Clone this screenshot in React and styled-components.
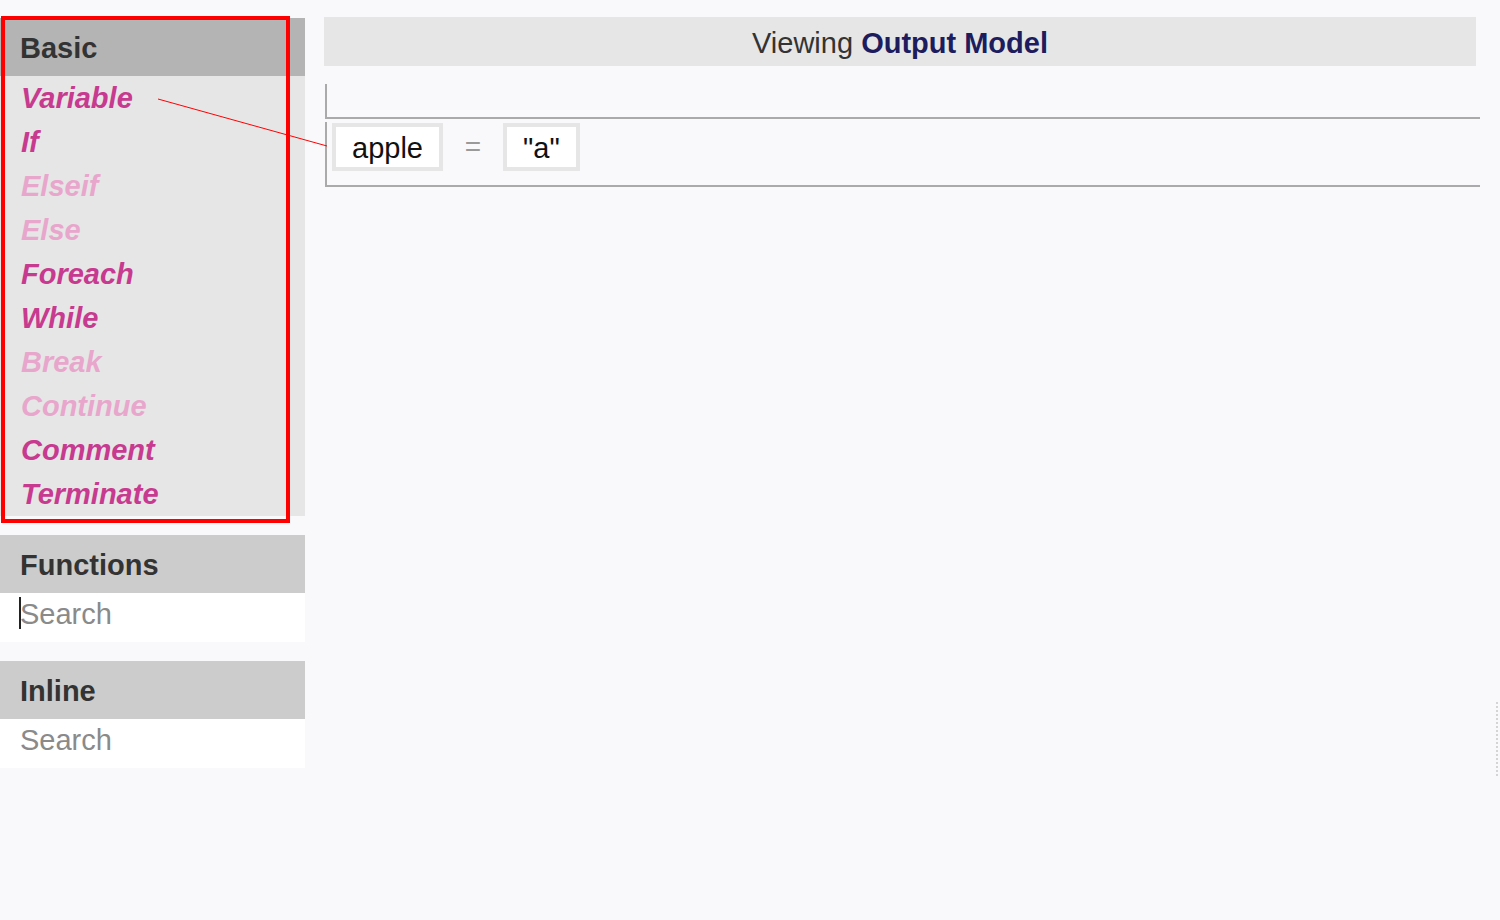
import React from 'react';
import styled, { createGlobalStyle } from 'styled-components';

const GlobalStyle = createGlobalStyle`
  html, body {
    margin: 0;
    padding: 0;
    background: #f9f9fb;
    font-family: "Liberation Sans", Arial, sans-serif;
  }
`;

const basicItems = [
  { name: 'Variable', enabled: true },
  { name: 'If', enabled: true },
  { name: 'Elseif', enabled: false },
  { name: 'Else', enabled: false },
  { name: 'Foreach', enabled: true },
  { name: 'While', enabled: true },
  { name: 'Break', enabled: false },
  { name: 'Continue', enabled: false },
  { name: 'Comment', enabled: true },
  { name: 'Terminate', enabled: true },
];

function App() {
  return (
    <Page>
      <GlobalStyle />
      <Sidebar>
        <Section>
          <SectionHeader tone='#b4b4b4'>Basic</SectionHeader>
          <ItemList>
            {basicItems.map((item) => (
              <Item key={item.name} enabled={item.enabled}>
                {item.name}
              </Item>
            ))}
          </ItemList>
        </Section>

        <Section>
          <SectionHeader tone='#cccccc'>Functions</SectionHeader>
          <SearchWrap>
            <Caret />
            <SearchInput placeholder='Search' />
          </SearchWrap>
        </Section>

        <Section>
          <SectionHeader tone='#cccccc'>Inline</SectionHeader>
          <SearchWrap>
            <SearchInput placeholder='Search' />
          </SearchWrap>
        </Section>
      </Sidebar>

      <Main>
        <TitleBar>
          Viewing <strong>Output Model</strong>
        </TitleBar>

        <Block height={32} />
        <Block height={62}>
          <Token>apple</Token>
          <Equals>=</Equals>
          <Token>"a"</Token>
        </Block>
      </Main>

      {/* annotation overlay */}
      <Highlight />
      <Pointer width='1500' height='920'>
        <line x1='158' y1='99' x2='327' y2='146' stroke='#ff0000' strokeWidth='1' />
      </Pointer>
      <Grip />
    </Page>
  );
}

const Page = styled.div`
  position: relative;
  display: flex;
  align-items: flex-start;
  width: 1500px;
  height: 920px;
  padding-top: 17px;
  box-sizing: border-box;
  overflow: hidden;
`;

const Sidebar = styled.div`
  width: 305px;
  flex-shrink: 0;
  display: flex;
  flex-direction: column;
  gap: 19px;
  padding-top: 1px;
`;

const Section = styled.div`
  display: flex;
  flex-direction: column;
`;

const SectionHeader = styled.div`
  height: 58px;
  line-height: 60px;
  padding-left: 20px;
  background: ${(props) => props.tone};
  color: #333333;
  font-size: 29px;
  font-weight: bold;
`;

const ItemList = styled.div`
  background: #e6e6e6;
  display: flex;
  flex-direction: column;
`;

const Item = styled.div`
  height: 44px;
  line-height: 44px;
  padding-left: 21px;
  font-size: 29px;
  font-weight: bold;
  font-style: italic;
  color: ${(props) => (props.enabled ? '#c73a8f' : '#e8a6cc')};
`;

const SearchWrap = styled.div`
  position: relative;
  background: #ffffff;
  height: 49px;
`;

const SearchInput = styled.input`
  width: 100%;
  height: 42px;
  box-sizing: border-box;
  border: none;
  outline: none;
  background: transparent;
  padding: 0 0 0 20px;
  font-family: "Liberation Sans", Arial, sans-serif;
  font-size: 29px;
  color: #333;

  &::placeholder {
    color: #8a8a8a;
  }
`;

const Caret = styled.span`
  position: absolute;
  left: 19px;
  top: 4px;
  width: 2px;
  height: 32px;
  background: #222;
`;

const Main = styled.div`
  flex: 1;
  margin-left: 19px;
  margin-right: 20px;
  display: flex;
  flex-direction: column;
`;

const TitleBar = styled.div`
  height: 49px;
  line-height: 52px;
  margin-right: 4px;
  margin-bottom: 18px;
  background: #e6e6e6;
  text-align: center;
  font-size: 29px;
  color: #333333;

  strong {
    color: #1c1c5e;
  }
`;

const Block = styled.div`
  height: ${(props) => props.height}px;
  margin-left: 1px;
  margin-bottom: 3px;
  border-left: 2px solid #aaaaaa;
  border-bottom: 2px solid #aaaaaa;
  display: flex;
  align-items: flex-start;
  padding: 1px 0 0 5px;
  box-sizing: content-box;
`;

const Token = styled.div`
  height: 40px;
  line-height: 42px;
  padding: 0 16px;
  border: 4px solid #e6e6e6;
  background: #ffffff;
  font-size: 29px;
  color: #111;
`;

const Equals = styled.div`
  width: 60px;
  text-align: center;
  line-height: 48px;
  font-size: 28px;
  color: #9a9a9a;
`;

const Highlight = styled.div`
  position: absolute;
  left: 1px;
  top: 16px;
  width: 281px;
  height: 499px;
  border: 4px solid #ff0000;
  pointer-events: none;
`;

const Pointer = styled.svg`
  position: absolute;
  left: 0;
  top: 0;
  pointer-events: none;
`;

const Grip = styled.div`
  position: absolute;
  right: 0;
  top: 702px;
  width: 2px;
  height: 74px;
  border-left: 2px dotted #d4d4d4;
`;

export default App;
